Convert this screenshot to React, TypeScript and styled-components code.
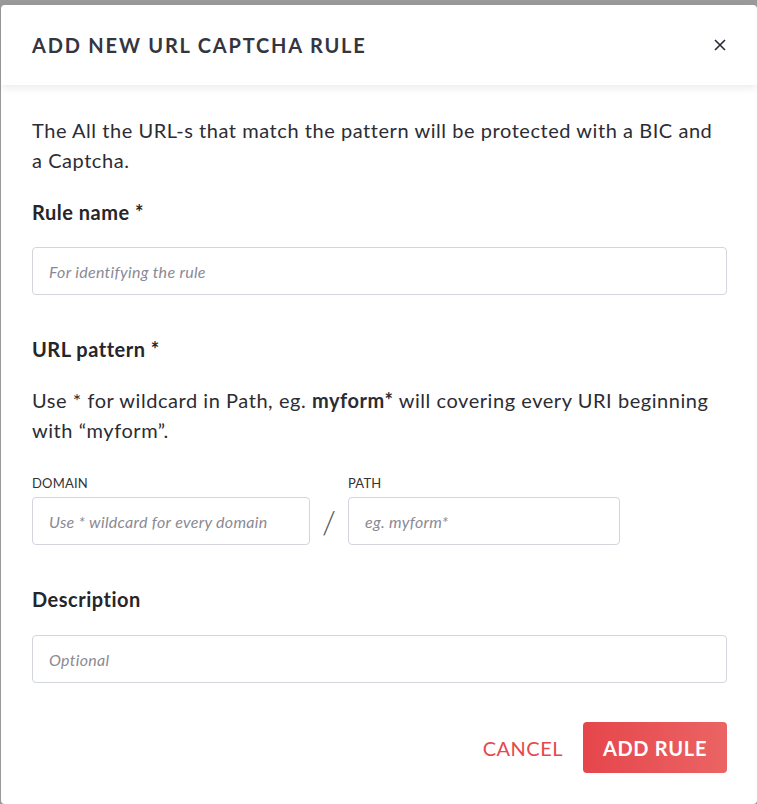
import styled, { createGlobalStyle } from "styled-components";

const GlobalStyle = createGlobalStyle`
  html, body {
    margin: 0;
    padding: 0;
    background: #9a9a9a;
    font-family: Lato, "Noto Sans", sans-serif;
  }
  * {
    box-sizing: border-box;
  }
`;

const Backdrop = styled.div`
  min-height: 804px;
  padding: 5px 0 0 1px;
  display: flex;
`;

const Modal = styled.div`
  flex: 1;
  background: #fff;
  border-radius: 4px;
  display: flex;
  flex-direction: column;
`;

const Header = styled.header`
  height: 80px;
  padding: 0 29px 0 31px;
  display: flex;
  align-items: center;
  justify-content: space-between;
  box-shadow: 0 3px 8px rgba(0, 0, 0, 0.08);
  position: relative;
`;

const Title = styled.h2`
  margin: 0;
  font-size: 20px;
  font-weight: 700;
  letter-spacing: 1.8px;
  color: #35353f;
`;

const Close = styled.button`
  border: none;
  background: none;
  padding: 0;
  width: 16px;
  height: 16px;
  display: flex;
  align-items: center;
  justify-content: center;
  cursor: pointer;
`;

const Body = styled.div`
  padding: 30px 30px 0 31px;
  display: flex;
  flex-direction: column;
`;

const Text = styled.p<{ $top?: number }>`
  margin: ${(p) => p.$top ?? 0}px 0 0;
  font-size: 20px;
  line-height: 30px;
  letter-spacing: 0.55px;
  color: #2c2c34;
  b {
    font-weight: 700;
  }
`;

const Label = styled.h3<{ $top: number }>`
  margin: ${(p) => p.$top}px 0 0;
  font-size: 20px;
  line-height: 24px;
  letter-spacing: 0.5px;
  font-weight: 700;
  color: #25252b;
`;

const Input = styled.input<{ $top?: number }>`
  margin-top: ${(p) => p.$top ?? 0}px;
  width: 100%;
  height: 48px;
  border: 1px solid #d2d5dc;
  border-radius: 4px;
  padding: 0 16px;
  font-family: inherit;
  font-size: 16px;
  letter-spacing: 0.3px;
  outline: none;
  &::placeholder {
    color: #8a8a94;
    font-style: italic;
  }
`;

const Pattern = styled.div`
  margin-top: 30px;
  display: flex;
  align-items: flex-end;
`;

const Field = styled.label<{ $w: number }>`
  width: ${(p) => p.$w}px;
  display: flex;
  flex-direction: column;
  gap: 6px;
`;

const SmallCaps = styled.span`
  font-size: 13px;
  line-height: 16px;
  letter-spacing: 0.2px;
  color: #333;
`;

const Slash = styled.span`
  width: 38px;
  height: 48px;
  display: flex;
  align-items: center;
  justify-content: center;
  font-size: 32px;
  font-weight: 300;
  color: #555;
`;

const Footer = styled.div`
  margin-top: 39px;
  display: flex;
  justify-content: flex-end;
  align-items: center;
  gap: 20px;
`;

const TextButton = styled.button`
  border: none;
  background: none;
  padding: 0;
  font-family: inherit;
  font-size: 20px;
  letter-spacing: 0.5px;
  color: #e8474c;
  cursor: pointer;
`;

const PrimaryButton = styled.button`
  height: 51px;
  width: 144px;
  border: none;
  border-radius: 4px;
  background: linear-gradient(90deg, #e5464b, #eb6464);
  color: #fff;
  font-family: inherit;
  font-size: 20px;
  font-weight: 700;
  letter-spacing: 0.7px;
  cursor: pointer;
`;

export default function App() {
  return (
    <>
      <GlobalStyle />
      <Backdrop>
        <Modal>
          <Header>
            <Title>ADD NEW URL CAPTCHA RULE</Title>
            <Close aria-label="Close">
              <svg width="12" height="12" viewBox="0 0 12 12">
                <path d="M1 1L11 11M11 1L1 11" stroke="#2a2a35" strokeWidth="1.6" />
              </svg>
            </Close>
          </Header>
          <Body>
            <Text>
              The All the URL-s that match the pattern will be protected with a BIC and a Captcha.
            </Text>
            <Label $top={25}>Rule name *</Label>
            <Input $top={23} placeholder="For identifying the rule" />
            <Label $top={42}>URL pattern *</Label>
            <Text $top={24}>
              Use * for wildcard in Path, eg. <b>myform*</b> will covering every URI beginning
              with “myform”.
            </Text>
            <Pattern>
              <Field $w={278}>
                <SmallCaps>DOMAIN</SmallCaps>
                <Input placeholder="Use * wildcard for every domain" />
              </Field>
              <Slash>/</Slash>
              <Field $w={272}>
                <SmallCaps>PATH</SmallCaps>
                <Input placeholder="eg. myform*" />
              </Field>
            </Pattern>
            <Label $top={42}>Description</Label>
            <Input $top={24} placeholder="Optional" />
            <Footer>
              <TextButton>CANCEL</TextButton>
              <PrimaryButton>ADD RULE</PrimaryButton>
            </Footer>
          </Body>
        </Modal>
      </Backdrop>
    </>
  );
}
